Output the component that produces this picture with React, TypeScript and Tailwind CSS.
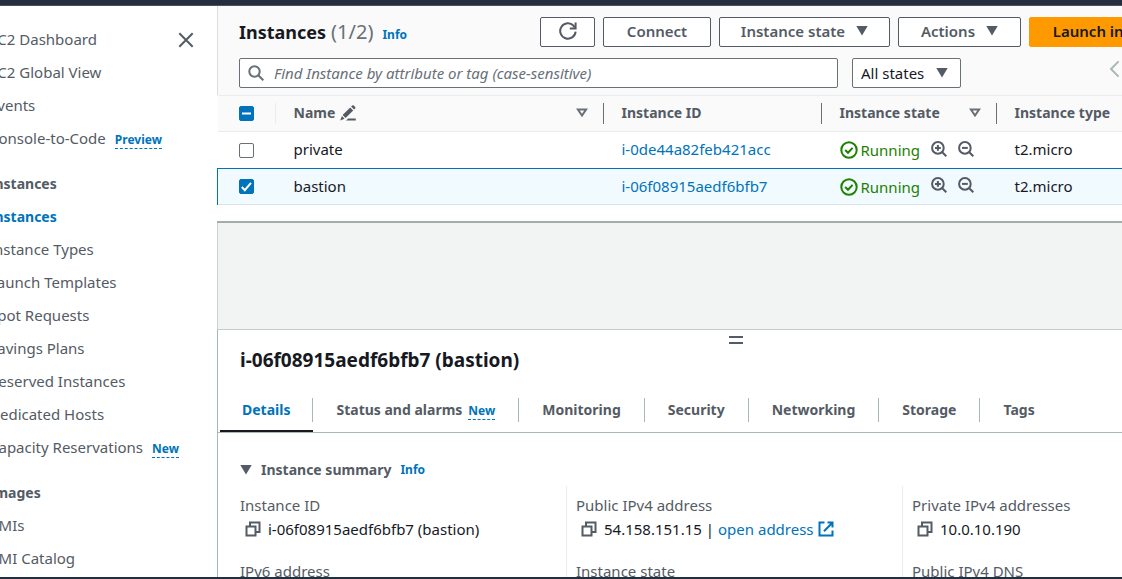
import React from "react";

type IconProps = { className?: string };

const Caret = ({ className = "" }: IconProps) => (
  <svg viewBox="0 0 12 10" className={`h-[10px] w-[12px] shrink-0 fill-current ${className}`} aria-hidden="true">
    <path d="M0.3 0h11.4L6 9.6z" />
  </svg>
);

const SortIcon = () => (
  <svg viewBox="0 0 12 10" className="h-[10px] w-[12px] shrink-0 fill-none stroke-[#687078]" strokeWidth="2" aria-hidden="true">
    <path d="M1.9 1.6h8.2L6 7.6z" />
  </svg>
);

const CopyIcon = () => (
  <svg viewBox="0 0 16 16" className="size-4 fill-none stroke-[#545b64]" strokeWidth="2" aria-hidden="true">
    <path d="M1.5 5.5h9v9h-9z" />
    <path d="M5 5V1.5h9.5V11H11" />
  </svg>
);

const ExternalIcon = () => (
  <svg viewBox="0 0 16 16" className="size-4 shrink-0 fill-none stroke-[#0073bb]" strokeWidth="2" aria-hidden="true">
    <path d="M6.5 1.5H1.5v13h13V9.5M9.5 1.5h5v5M14.4 1.8L6 10.2" />
  </svg>
);

const ZoomIcon = ({ plus = false }: { plus?: boolean }) => (
  <svg viewBox="0 0 16 16" className="size-4 fill-none stroke-[#545b64]" strokeWidth="2" aria-hidden="true">
    <circle cx="6.9" cy="6.9" r="5.8" />
    <path d="M11 11l4.3 4.3" />
    <path d={plus ? "M4 6.9h5.8M6.9 4v5.8" : "M4 6.9h5.8"} />
  </svg>
);

const StatusIcon = () => (
  <svg viewBox="0 0 18 18" className="size-[18px] fill-none stroke-[#1d8102]" strokeWidth="2" aria-hidden="true">
    <circle cx="9" cy="9" r="7.7" />
    <path d="M5.2 9l2.8 2.8 4.6-4.9" />
  </svg>
);

const Info = () => (
  <a href="#info" className="text-xs font-bold text-[#0073bb]">
    Info
  </a>
);

const Badge = ({ children }: { children: string }) => (
  <span className="border-b border-dashed border-[#0073bb] text-xs leading-4 font-bold text-[#0073bb]">{children}</span>
);

type NavEntry = { label: string; badge?: string; active?: boolean };

const groups: { title?: string; items: NavEntry[] }[] = [
  {
    items: [
      { label: "EC2 Dashboard" },
      { label: "EC2 Global View" },
      { label: "Events" },
      { label: "Console-to-Code", badge: "Preview" },
    ],
  },
  {
    title: "Instances",
    items: [
      { label: "Instances", active: true },
      { label: "Instance Types" },
      { label: "Launch Templates" },
      { label: "Spot Requests" },
      { label: "Savings Plans" },
      { label: "Reserved Instances" },
      { label: "Dedicated Hosts" },
      { label: "Capacity Reservations", badge: "New" },
    ],
  },
  { title: "Images", items: [{ label: "AMIs" }, { label: "AMI Catalog" }] },
];

function Sidebar() {
  return (
    <aside className="relative w-[217px] shrink-0 overflow-hidden bg-white">
      <nav className="-ml-[11px] flex flex-col gap-3 pt-[17px] whitespace-nowrap">
        {groups.map((g, i) => (
          <section key={i}>
            {g.title && <h2 className="text-sm leading-[33px] font-bold">{g.title}</h2>}
            <ul>
              {g.items.map((it) => (
                <li key={it.label} className="flex h-[33px] items-baseline gap-[9px] leading-[33px]">
                  <a href="#nav" className={it.active ? "text-sm leading-[33px] font-bold text-[#0073bb]" : ""}>
                    {it.label}
                  </a>
                  {it.badge && <Badge>{it.badge}</Badge>}
                </li>
              ))}
            </ul>
          </section>
        ))}
      </nav>
      <button aria-label="Close navigation" className="absolute top-[26px] right-[23px]">
        <svg viewBox="0 0 16 16" className="size-4 stroke-[#545b64]" strokeWidth="2">
          <path d="M1.3 1.3l13.4 13.4M14.7 1.3L1.3 14.7" />
        </svg>
      </button>
    </aside>
  );
}

const buttonBase = "flex h-[30px] shrink-0 items-center justify-center rounded-[2px] border pb-[2px] font-semibold";
const buttonNormal = "border-[#545b64] bg-white text-[#545b64]";

function Toolbar() {
  return (
    <div className="flex flex-col gap-[11px] border-l border-[#dcdede] pt-[11px] pr-[22px] pb-[7px] pl-[21px]">
      <div className="flex h-[30px] items-center gap-2">
        <h1 className="flex flex-1 items-baseline text-[18px] leading-7 font-bold text-[#16191f]">
          Instances<span className="mr-[9px] ml-[5px] text-[20px] font-normal text-[#687078]">(1/2)</span>
          <Info />
        </h1>
        <button aria-label="Refresh" className={`${buttonBase} ${buttonNormal} w-[55px]`}>
          <svg viewBox="0 0 18 18" className="size-[18px] fill-none stroke-[#545b64]" strokeWidth="2" aria-hidden="true">
            <path d="M16.6 9.6A7.7 7.7 0 1 1 14.6 3.8L16.2 5.8" />
            <path d="M16.6 0.6V6.4H10.8" />
          </svg>
        </button>
        <button className={`${buttonBase} ${buttonNormal} w-[108px]`}>Connect</button>
        <button className={`${buttonBase} ${buttonNormal} w-[171px] gap-[11px]`}>
          Instance state
          <Caret />
        </button>
        <button className={`${buttonBase} ${buttonNormal} w-[123px] gap-[11px]`}>
          Actions
          <Caret />
        </button>
        <button className={`${buttonBase} w-[202px] gap-4 border-[#ff9900] bg-[#ff9900] text-[#16191f]`}>
          Launch instances
          <Caret />
        </button>
      </div>
      <div className="flex items-center gap-[14px]">
        <label className="flex h-[30px] w-[599px] items-center gap-[10px] rounded-[2px] border border-[#687078] bg-white px-2">
          <svg viewBox="0 0 16 16" className="size-4 shrink-0 fill-none stroke-[#687078]" strokeWidth="2" aria-hidden="true">
            <circle cx="6.5" cy="6.5" r="5.2" />
            <path d="M10.3 10.3l5 5" />
          </svg>
          <input
            aria-label="Find Instance"
            placeholder="Find Instance by attribute or tag (case-sensitive)"
            className="min-w-0 flex-1 bg-transparent outline-none placeholder:text-[#687078] placeholder:italic"
          />
        </label>
        <div className="relative flex items-center">
          <select
            aria-label="Filter by state"
            className="h-[30px] w-[109px] appearance-none rounded-[2px] border border-[#687078] bg-white px-2 text-[#16191f]"
          >
            <option>All states</option>
          </select>
          <Caret className="pointer-events-none absolute right-[13px] text-[#545b64]" />
        </div>
        <button aria-label="Previous page" className="ml-[133px] self-start pt-[2px]">
          <svg viewBox="0 0 12 18" className="h-[18px] w-3 fill-none stroke-[#aab7b8]" strokeWidth="2">
            <path d="M10.6 1.4L3 9l7.6 7.6" />
          </svg>
        </button>
      </div>
    </div>
  );
}

function Check({ label, state }: { label: string; state: "on" | "off" | "mixed" }) {
  return (
    <span className="relative block size-[15px]">
      <input
        type="checkbox"
        aria-label={label}
        defaultChecked={state !== "off"}
        className="block size-[15px] appearance-none rounded-[2px] border border-[#687078] bg-white checked:border-[#0073bb] checked:bg-[#0073bb]"
      />
      {state !== "off" && (
        <svg viewBox="0 0 15 15" className="pointer-events-none absolute inset-0 fill-none stroke-white" strokeWidth="2">
          <path d={state === "on" ? "M2.8 8l3 3.2 6.2-7.4" : "M3 7.5h9"} />
        </svg>
      )}
    </span>
  );
}

const instances = [
  { name: "private", id: "i-0de44a82feb421acc", selected: false },
  { name: "bastion", id: "i-06f08915aedf6bfb7", selected: true },
];

const headCell = "h-[36px] p-0 text-left text-sm font-bold";
const headInner = "flex h-[21px] items-center justify-between border-l pr-[15px] pb-[2px] pl-[18px]";
const bodyCell = "pt-0 pb-[2px] pl-[19px]";

function InstanceTable() {
  return (
    <table className="w-full table-fixed border-collapse">
      <colgroup>
        <col className="w-[57px]" />
        <col className="w-[328px]" />
        <col className="w-[218px]" />
        <col className="w-[175px]" />
        <col />
      </colgroup>
      <thead>
        <tr className="border-y border-[#eaeded] bg-[#fafafa]">
          <th className="h-[36px] py-0 pl-[21px]">
            <Check label="Select all instances" state="mixed" />
          </th>
          <th className={headCell}>
            <div className={`${headInner} border-[#eaeded]`}>
              <span className="flex items-center gap-[5px]">
                Name
                <svg viewBox="0 0 16 16" className="size-4" aria-hidden="true">
                  <path
                    d="M2.6 10.1L10.2 2.5l3 3-7.6 7.6zM11.1 1.6l1-1a1.2 1.2 0 0 1 1.7 0l1.3 1.3a1.2 1.2 0 0 1 0 1.7l-1 1zM1.9 11.1l2.7 2.7L0.2 15.6zM8.2 13.4h7.6v2.2H6z"
                    fill="#545b64"
                  />
                </svg>
              </span>
              <SortIcon />
            </div>
          </th>
          <th className={headCell}>
            <div className={`${headInner} border-[#687078]`}>Instance ID</div>
          </th>
          <th className={headCell}>
            <div className={`${headInner} border-[#687078]`}>
              Instance state
              <SortIcon />
            </div>
          </th>
          <th className={headCell}>
            <div className={`${headInner} border-[#687078]`}>Instance type</div>
          </th>
        </tr>
      </thead>
      <tbody className="text-[#16191f]">
        {instances.map((r) => (
          <tr
            key={r.id}
            className={r.selected ? "border-t border-b border-t-[#0073bb] border-b-[#d5e6ea] bg-[#f1faff]" : "bg-white"}
          >
            <td className={r.selected ? "h-[36px] border-l border-l-[#0073bb] py-0 pl-[21px]" : "h-[37px] py-0 pl-[21px]"}>
              <Check label={`Select ${r.name}`} state={r.selected ? "on" : "off"} />
            </td>
            <td className={bodyCell}>{r.name}</td>
            <td className={bodyCell}>
              <a href="#instance" className="text-[#0073bb]">
                {r.id}
              </a>
            </td>
            <td className="py-0 pl-[19px]">
              <div className="flex items-center">
                <StatusIcon />
                <span className="ml-[3px] text-[#1d8102]">Running</span>
                <button aria-label="Add filter" className="ml-[11px] pb-[3px]">
                  <ZoomIcon plus />
                </button>
                <button aria-label="Exclude filter" className="ml-[11px] pb-[3px]">
                  <ZoomIcon />
                </button>
              </div>
            </td>
            <td className={bodyCell}>t2.micro</td>
          </tr>
        ))}
      </tbody>
    </table>
  );
}

const tabs: { label: string; badge?: string }[] = [
  { label: "Details" },
  { label: "Status and alarms", badge: "New" },
  { label: "Monitoring" },
  { label: "Security" },
  { label: "Networking" },
  { label: "Storage" },
  { label: "Tags" },
];

const tabBase = "flex h-[43px] items-center border-b-2 text-sm font-bold";

function Field({ label, value, next, children }: { label: string; value: string; next: string; children?: React.ReactNode }) {
  return (
    <div className="flex flex-col border-l border-[#eaeded] pt-2 pl-[9px] first:border-transparent">
      <div className="leading-[22px]">{label}</div>
      <div className="flex h-[26px] items-center pl-[5px] text-[#16191f]">
        <button aria-label={`Copy ${label}`} className="mr-[7px]">
          <CopyIcon />
        </button>
        {value}
        {children}
      </div>
      <div className="mt-[18px] leading-[22px]">{next}</div>
    </div>
  );
}

function DetailPanel() {
  return (
    <section className="flex-1 border-t border-l border-t-[#c4cccc] border-l-[#aab7b8] bg-white">
      <div className="flex h-[17px] items-center justify-center pt-[3px]">
        <div className="h-2 w-[14px] border-y-2 border-[#545b64]" />
      </div>
      <h2 className="px-[22px] text-[19px] leading-[26px] font-bold text-[#16191f]">i-06f08915aedf6bfb7 (bastion)</h2>
      <div role="tablist" className="mt-4 flex h-[44px] border-b border-[#aab7b8] pl-[2px]">
        {tabs.map((t, i) => (
          <button
            key={t.label}
            role="tab"
            aria-selected={i === 0}
            className={i === 0 ? `${tabBase} border-[#16191f] text-[#0073bb]` : `${tabBase} border-transparent`}
          >
            <span
              className={
                i === 0
                  ? "flex h-6 items-baseline border-r border-[#aab7b8] px-[22px] leading-6"
                  : i === tabs.length - 1
                    ? "flex h-6 items-baseline px-[23px] leading-6"
                    : "flex h-6 items-baseline gap-[6px] border-r border-[#aab7b8] px-[23px] leading-6"
              }
            >
              {t.label}
              {t.badge && <Badge>{t.badge}</Badge>}
            </span>
          </button>
        ))}
      </div>
      <div className="pt-[25px] pr-[15px] pl-[12px]">
        <h3 className="flex h-6 items-center gap-[9px] pl-[10px] text-sm font-bold">
          <Caret />
          Instance summary
          <Info />
        </h3>
        <div className="mt-1 grid h-[120px] grid-cols-3">
          <Field label="Instance ID" value="i-06f08915aedf6bfb7 (bastion)" next="IPv6 address" />
          <Field label="Public IPv4 address" value="54.158.151.15 |" next="Instance state">
            <a href="#address" className="ml-1 flex items-center gap-1 text-[#0073bb]">
              open address
              <ExternalIcon />
            </a>
          </Field>
          <Field label="Private IPv4 addresses" value="10.0.10.190" next="Public IPv4 DNS" />
        </div>
      </div>
    </section>
  );
}

export default function App() {
  return (
    <div className="flex h-screen flex-col overflow-hidden bg-white font-['Noto_Sans',sans-serif] text-[15px] leading-[22px] text-[#545b64]">
      <header className="h-[6px] shrink-0 border-b border-[#524f60] bg-[#232f3e]" />
      <div className="flex min-h-0 flex-1">
        <Sidebar />
        <main className="min-w-0 flex-1 overflow-hidden">
          <div className="flex h-full min-w-[1036px] flex-col">
            <div className="border-b-2 border-[#a3adad] bg-white pb-4">
              <div className="bg-[#fafafa]">
                <Toolbar />
              </div>
              <InstanceTable />
            </div>
            <div className="h-[106px] shrink-0 border-l border-[#c9d0d0] bg-[#f2f3f3]" />
            <DetailPanel />
          </div>
        </main>
      </div>
      <footer className="h-[2px] shrink-0 bg-[#232f3e]" />
    </div>
  );
}
